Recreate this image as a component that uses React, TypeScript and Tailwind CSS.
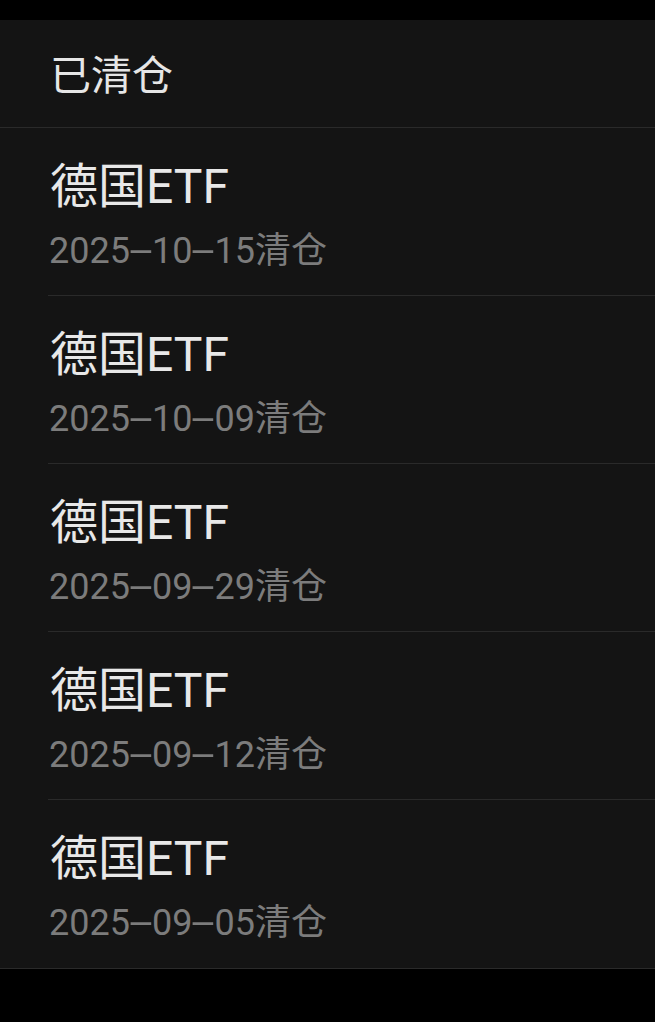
import React from "react";

const records = [
  { name: "德国ETF", date: "2025-10-15" },
  { name: "德国ETF", date: "2025-10-09" },
  { name: "德国ETF", date: "2025-09-29" },
  { name: "德国ETF", date: "2025-09-12" },
  { name: "德国ETF", date: "2025-09-05" },
];

const font = { fontFamily: 'Roboto, "Noto Sans CJK SC", sans-serif' };

// date digits with the wide dash the app font draws
const DateText = ({ date }: { date: string }) => {
  const parts = date.split("-");
  return (
    <>
      {parts.map((p, i) => (
        <React.Fragment key={i}>
          {i > 0 && (
            <span className="inline-block w-[22px] text-center scale-x-[2.4]">-</span>
          )}
          {p}
        </React.Fragment>
      ))}
    </>
  );
};

const App = () => {
  return (
    <div className="w-[655px] h-[1022px] bg-black pt-[20px]" style={font}>
      <div className="bg-[#141414] border-b border-[#2a2a2a]">
        <div className="h-[108px] flex items-center px-[50px] pt-[6px] border-b border-[#2a2a2a]">
          <span className="text-[41px] leading-none text-[#e6e6e6]">已清仓</span>
        </div>
        <div className="flex flex-col">
          {records.map((r, i) => (
            <div key={i} className="pl-[48px]">
              <div
                className={
                  "h-[168px] pt-[30px] flex flex-col " +
                  (i < records.length - 1 ? "border-b border-[#2a2a2a]" : "")
                }
              >
                <span className="pl-[2px] text-[48px] leading-[58px] text-[#e8e8e8]">
                  {r.name}
                </span>
                <span className="pl-[1px] mt-[12px] text-[36px] leading-[46px] text-[#7c7c7c]">
                  <DateText date={r.date} />清仓
                </span>
              </div>
            </div>
          ))}
        </div>
      </div>
    </div>
  );
};

export default App;
